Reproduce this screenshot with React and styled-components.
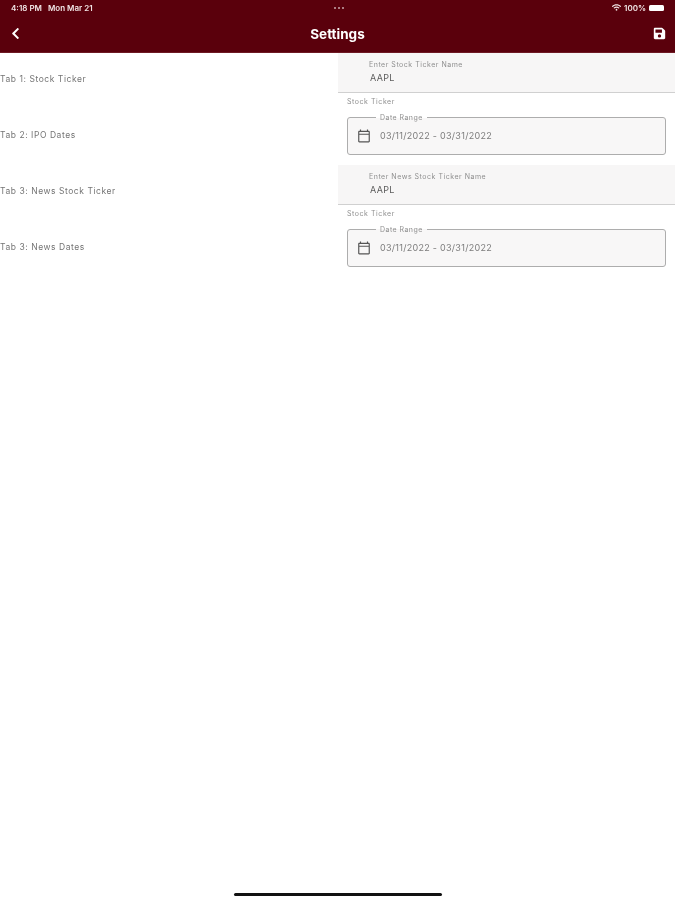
import React from "react"
import styled, { createGlobalStyle } from "styled-components"
import { FaSave, FaChevronLeft, FaWifi } from "react-icons/fa"
import { MdOutlineCalendarToday } from "react-icons/md"

const GlobalStyle = createGlobalStyle`
  html, body {
    margin: 0;
    padding: 0;
    background: #fff;
    font-family: "Inter", "Liberation Sans", sans-serif;
  }
`

const Page = styled.div`
  position: relative;
  width: 675px;
  height: 900px;
  overflow: hidden;
  background: #fff;
  filter: blur(0.4px);
`

const Header = styled.header`
  height: 53px;
  box-sizing: border-box;
  background: #5a000c;
  color: #fff;
  border-bottom: 1px solid #6e1a24;
`

const StatusBar = styled.div`
  height: 15px;
  display: grid;
  grid-template-columns: 1fr auto 1fr;
  align-items: center;
  padding: 0 9px 0 11px;
  font-size: 8px;
  font-weight: 600;
  color: #f1e4e5;
`

const StatusLeft = styled.div`
  display: flex;
  gap: 6px;
`

const StatusDots = styled.div`
  display: flex;
  gap: 2px;
`

const Dot = styled.span`
  width: 2px;
  height: 2px;
  border-radius: 50%;
  background: #c9a6aa;
`

const StatusRight = styled.div`
  display: flex;
  justify-content: flex-end;
  align-items: center;
  gap: 3px;
`

const Battery = styled.span`
  display: block;
  width: 15px;
  height: 6px;
  margin-right: 2px;
  border-radius: 1.5px;
  background: #fff;
`

const NavBar = styled.div`
  height: 37px;
  display: grid;
  grid-template-columns: 1fr auto 1fr;
  align-items: center;
  padding: 0 9px;
`

const Title = styled.div`
  font-size: 13.5px;
  font-weight: 700;
`

const NavRight = styled.div`
  display: flex;
  justify-content: flex-end;
`

const Content = styled.main`
  display: grid;
  grid-template-columns: 338px 337px;
`

const Labels = styled.div`
  display: flex;
  flex-direction: column;
`

const RowLabel = styled.div`
  height: 56px;
  padding-top: 20px;
  box-sizing: border-box;
  font-size: 8.5px;
  line-height: 12px;
  letter-spacing: 0.55px;
  color: #757575;
`

const Fields = styled.div`
  display: flex;
  flex-direction: column;
`

const FilledField = styled.div`
  height: 39.5px;
  box-sizing: border-box;
  padding: 6.5px 0 0 31px;
  background: #f7f6f6;
  border-bottom: 1.5px solid #d0d0d0;
`

const FilledLabel = styled.div`
  font-size: 7px;
  line-height: 10px;
  letter-spacing: 0.52px;
  color: #8f8f8f;
`

const FilledValue = styled.div`
  margin: 2px 0 0 1px;
  font-size: 9px;
  line-height: 12px;
  letter-spacing: 0.3px;
  color: #5c5c5c;
`

const Helper = styled.div`
  height: 24px;
  box-sizing: border-box;
  padding: 4.5px 0 0 9px;
  font-size: 7px;
  line-height: 10px;
  letter-spacing: 0.55px;
  color: #8f8f8f;
`

const DateBox = styled.div`
  position: relative;
  height: 38.5px;
  margin: 0 9px 10px 9px;
  box-sizing: border-box;
  display: flex;
  align-items: center;
  gap: 9px;
  padding-left: 9px;
  background: #f8f7f7;
  border: 1px solid #adadad;
  border-radius: 3px;
  color: #666;
`

const DateLegend = styled.span`
  position: absolute;
  top: -5px;
  left: 28px;
  padding: 0 4px;
  background: linear-gradient(#fff 50%, #f8f7f7 50%);
  font-size: 7px;
  line-height: 9px;
  letter-spacing: 0.45px;
  color: #8f8f8f;
`

const DateValue = styled.span`
  font-size: 9px;
  letter-spacing: 0.28px;
  color: #7c7c7c;
`

const HomeIndicator = styled.div`
  position: absolute;
  left: 234px;
  bottom: 4px;
  width: 208px;
  height: 3px;
  border-radius: 2px;
  background: #111;
`

const labels = ["Tab 1: Stock Ticker", "Tab 2: IPO Dates", "Tab 3: News Stock Ticker", "Tab 3: News Dates"]

const groups = [
  { name: "Enter Stock Ticker Name" },
  { name: "Enter News Stock Ticker Name" },
]

export default function App() {
  return (
    <Page>
      <GlobalStyle />
      <Header>
        <StatusBar>
          <StatusLeft>
            <span>4:18 PM</span>
            <span>Mon Mar 21</span>
          </StatusLeft>
          <StatusDots>
            <Dot />
            <Dot />
            <Dot />
          </StatusDots>
          <StatusRight>
            <FaWifi size={9} />
            <span>100%</span>
            <Battery />
          </StatusRight>
        </StatusBar>
        <NavBar>
          <FaChevronLeft size={13} />
          <Title>Settings</Title>
          <NavRight>
            <FaSave size={13} />
          </NavRight>
        </NavBar>
      </Header>
      <Content>
        <Labels>
          {labels.map((label) => (
            <RowLabel key={label}>{label}</RowLabel>
          ))}
        </Labels>
        <Fields>
          {groups.map((group) => (
            <React.Fragment key={group.name}>
              <FilledField>
                <FilledLabel>{group.name}</FilledLabel>
                <FilledValue>AAPL</FilledValue>
              </FilledField>
              <Helper>Stock Ticker</Helper>
              <DateBox>
                <DateLegend>Date Range</DateLegend>
                <MdOutlineCalendarToday size={14} color="#555" />
                <DateValue>03/11/2022 - 03/31/2022</DateValue>
              </DateBox>
            </React.Fragment>
          ))}
        </Fields>
      </Content>
      <HomeIndicator />
    </Page>
  )
}
